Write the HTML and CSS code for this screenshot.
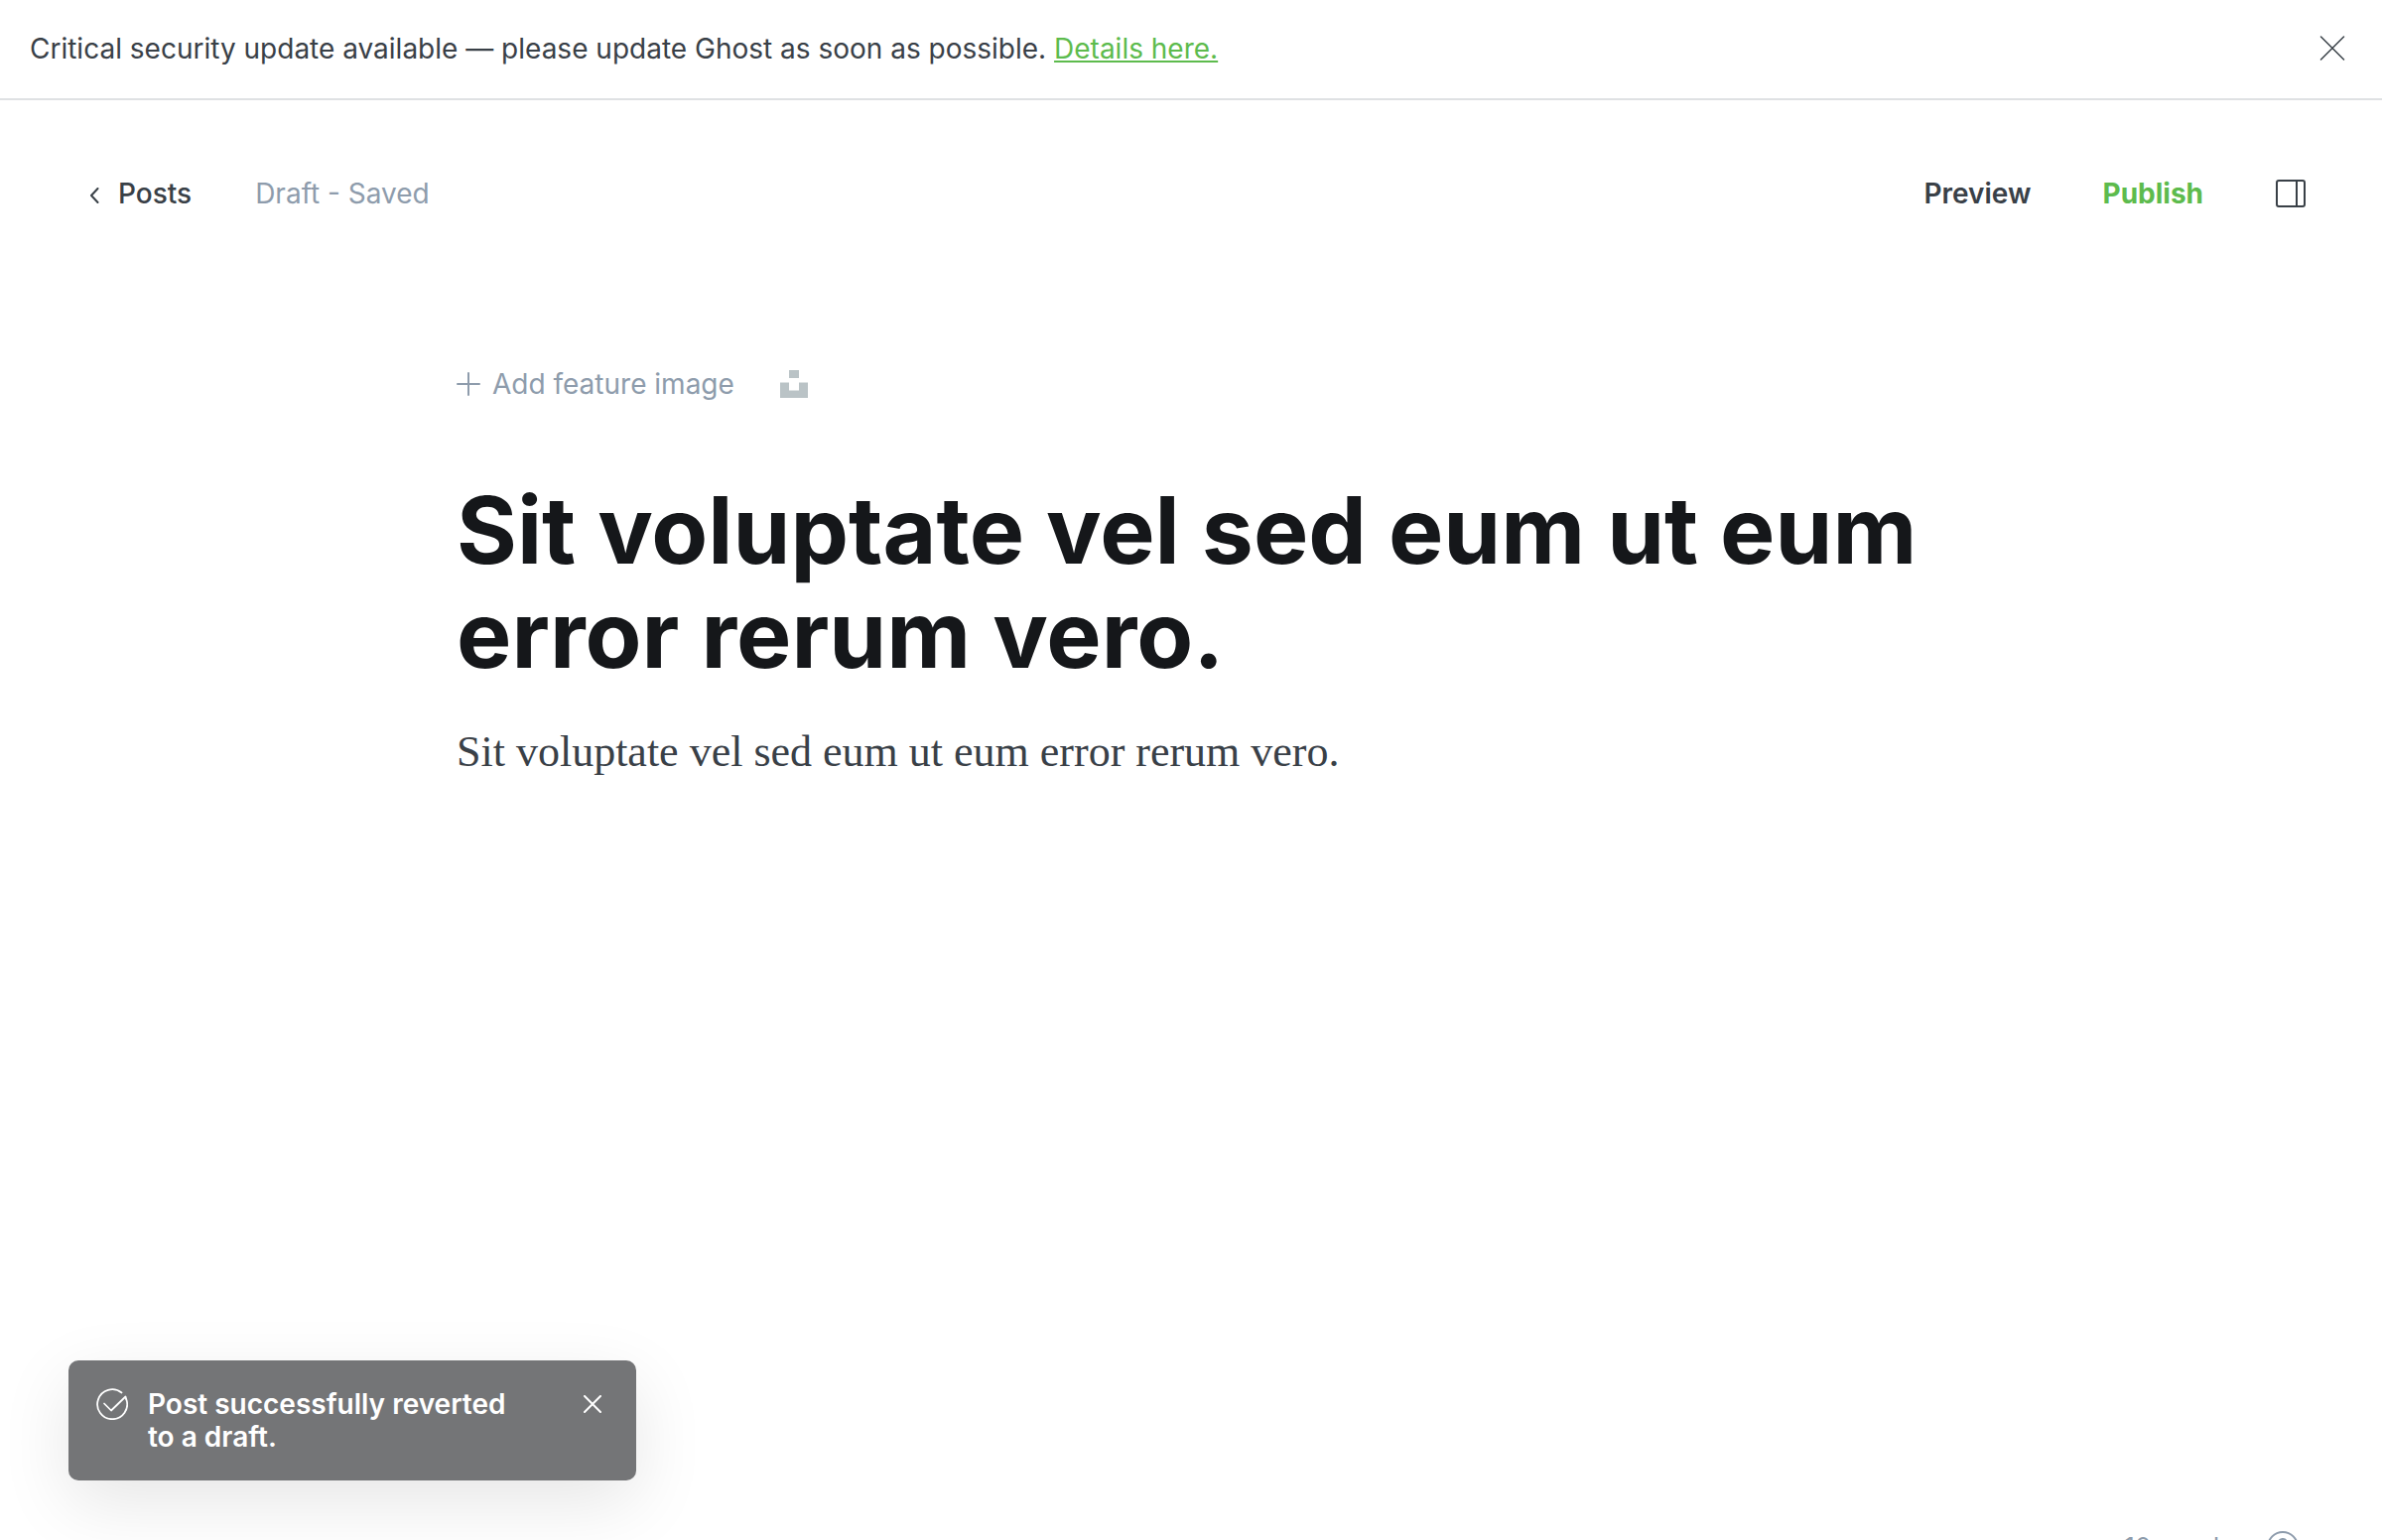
FILE: index.html
```html
<!DOCTYPE html>
<html lang="en">
<head>
<meta charset="utf-8">
<meta name="viewport" content="width=device-width, initial-scale=1">
<title>Edit post</title>
<link rel="stylesheet" href="styles.css">
</head>
<body>
<div class="app">
  <aside class="banner">
    <p class="banner-text">Critical security update available — please update Ghost as soon as possible. <a class="banner-link" href="#details">Details here.</a></p>
    <button class="icon-button" type="button" aria-label="Dismiss">
      <svg width="26" height="26" viewBox="0 0 26 26" fill="none" stroke="currentColor" stroke-width="1.5" stroke-linecap="round"><path d="M1.5 1l23 23M24.500 1l-23 23"/></svg>
    </button>
  </aside>

  <header class="toolbar">
    <a class="back" href="#posts">
      <svg width="12" height="20" viewBox="0 0 12 20" fill="none" stroke="currentColor" stroke-width="2" stroke-linecap="round" stroke-linejoin="round"><path d="M10.500 5L4 12l6.500 7"/></svg>
      Posts
    </a>
    <span class="status">Draft - Saved</span>
    <nav class="actions">
      <button class="action" type="button">Preview</button>
      <button class="action publish" type="button">Publish</button>
      <button class="icon-button" type="button" aria-label="Settings">
        <svg width="32" height="30" viewBox="0 0 32 30" fill="none" stroke="currentColor" stroke-width="2"><rect x="2" y="2" width="28" height="26" rx="2"/><path d="M22 2v26"/></svg>
      </button>
    </nav>
  </header>

  <main class="editor">
    <div class="feature">
      <button class="add-image" type="button">
        <svg width="24" height="24" viewBox="0 0 24 24" fill="none" stroke="currentColor" stroke-width="2" stroke-linecap="round"><path d="M12 1v22M1 12h22"/></svg>
        Add feature image
      </button>
      <button class="unsplash" type="button" aria-label="Unsplash">
        <svg width="28" height="28" viewBox="0 0 28 28" fill="currentColor"><path d="M9 0h10v8H9zM0 12.500h9v8h10v-8h9V28H0z"/></svg>
      </button>
    </div>
    <h1 class="title">Sit voluptate vel sed eum ut eum error rerum vero.</h1>
    <p class="body-text">Sit voluptate vel sed eum ut eum error rerum vero.</p>
  </main>

  <div class="toast" role="status">
    <svg class="toast-icon" width="32" height="32" viewBox="0 0 32 32" fill="none" stroke="currentColor" stroke-width="1.75" stroke-linecap="round" stroke-linejoin="round"><path d="M25.500 4.500A15 15 0 1 0 30.200 11"/><path d="M8 15.500l7 7L29.500 8.500L30.200 11"/></svg>
    <p class="toast-text">Post successfully reverted to a draft.</p>
    <button class="icon-button toast-close" type="button" aria-label="Close">
      <svg width="18" height="18" viewBox="0 0 18 18" fill="none" stroke="currentColor" stroke-width="2" stroke-linecap="round"><path d="M1 1l16 16M17 1L1 17"/></svg>
    </button>
  </div>

  <footer class="word-count">
    <span>10 words</span>
    <a class="help" href="#help" aria-label="Help">
      <svg width="32" height="32" viewBox="0 0 32 32" fill="none" stroke="currentColor" stroke-width="2" stroke-linecap="round"><circle cx="16" cy="16" r="15"/><path d="M12 12a4 4 0 1 1 5.500 3.700c-1 .5-1.500 1.300-1.500 2.300v1M16 23v.5"/></svg>
    </a>
  </footer>
</div>
</body>
</html>
```
FILE: styles.css
```css
* { box-sizing: border-box; }

body {
  margin: 0;
  background: #fff;
  color: #394047;
  font: 400 28px/34px Inter, "Liberation Sans", sans-serif;
}

h1, p { margin: 0; }
a { color: inherit; text-decoration: none; }
svg { display: block; flex: none; }

button {
  margin: 0;
  padding: 0;
  border: 0;
  background: none;
  color: inherit;
  font: inherit;
  cursor: pointer;
}

.app {
  position: relative;
  height: 100vh;
  overflow: hidden;
}

.banner {
  display: flex;
  align-items: center;
  justify-content: space-between;
  padding: 32px 37px 33px 30px;
  border-bottom: 2px solid #dfe1e3;
}

.banner-link {
  color: #5dbb4d;
  text-decoration: underline;
}

.toolbar {
  display: flex;
  align-items: center;
  padding: 77px 76px 0 88px;
}

.back {
  display: flex;
  align-items: center;
  gap: 19px;
  font-weight: 500;
}

.status {
  margin-left: 64px;
  color: #8e9cac;
}

.actions {
  display: flex;
  align-items: center;
  gap: 72px;
  margin-left: auto;
}

.action { font-weight: 600; }

.publish {
  color: #5dbb4d;
  font-weight: 700;
}

.editor {
  max-width: 1480px;
  margin: 158px auto 0;
}

.feature {
  display: flex;
  align-items: center;
  gap: 46px;
  color: #8e9cac;
}

.add-image {
  display: flex;
  align-items: center;
  gap: 12px;
}

.unsplash { color: #bac3c6; }

.title {
  margin-top: 78px;
  color: #15171a;
  font-size: 93px;
  font-weight: 700;
  line-height: 105px;
}

.body-text {
  margin-top: 34px;
  font-family: Georgia, "Liberation Serif", serif;
  font-size: 44px;
  line-height: 64px;
}

.toast {
  position: absolute;
  left: 69px;
  bottom: 60px;
  display: flex;
  align-items: flex-start;
  width: 572px;
  padding: 28px 35px 27px 28px;
  border-radius: 10px;
  background: #747577;
  color: #fff;
  box-shadow: 0 22px 70px rgba(0, 0, 0, 0.1);
}

.toast-text {
  flex: 1;
  margin-left: 20px;
  padding-right: 60px;
  font-weight: 600;
  line-height: 33px;
}

.toast-close { margin-top: 7px; }

.word-count {
  position: absolute;
  right: 84px;
  bottom: -23px;
  display: flex;
  align-items: center;
  gap: 34px;
  color: #8e9cac;
  font-size: 26px;
  line-height: 32px;
}
```
